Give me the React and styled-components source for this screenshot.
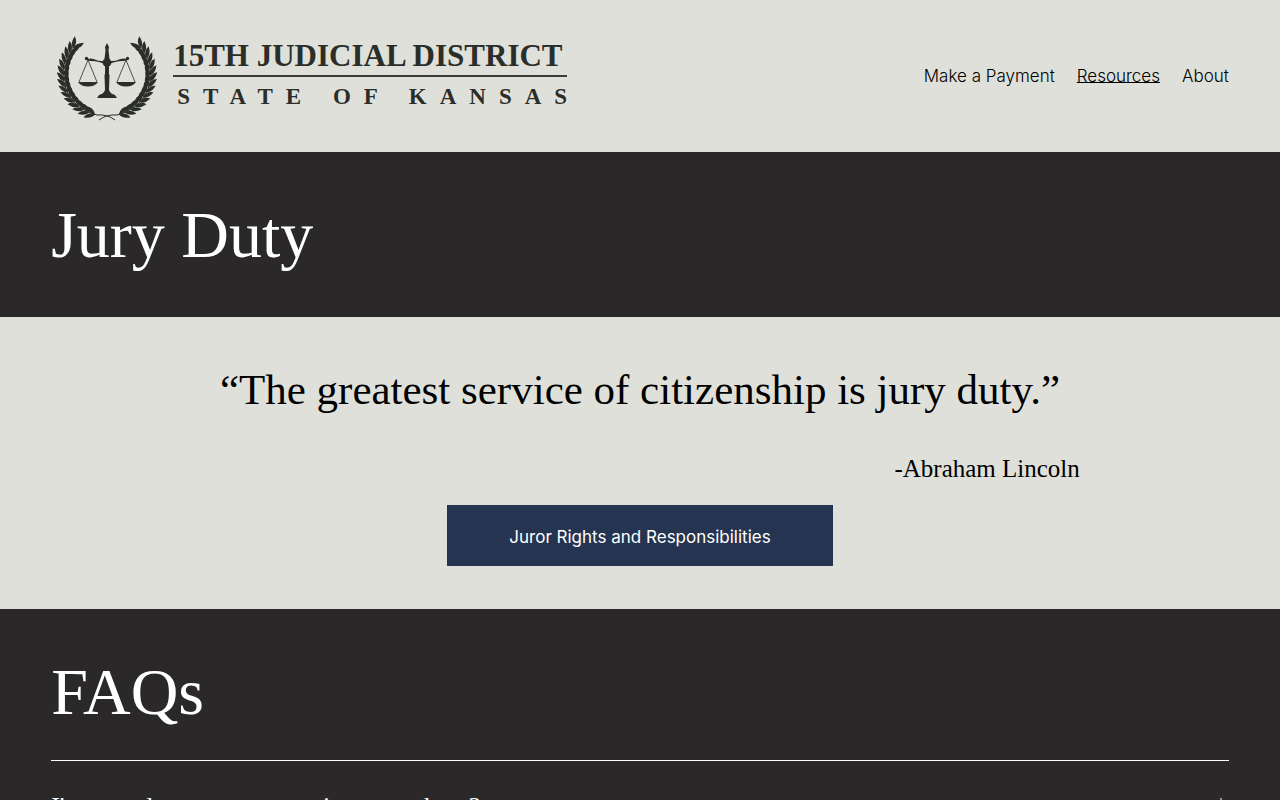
import React from "react";
import styled, { createGlobalStyle } from "styled-components";

const Global = createGlobalStyle`
  * { box-sizing: border-box; }
  body { margin: 0; background: #2b2829; color: #000; font-family: Inter, "Liberation Sans", sans-serif; }
  h1, h2, p { margin: 0; font-weight: 400; }
`;
const serif = `"Liberation Serif", serif`;

const Header = styled.header`
  display: flex; align-items: center; justify-content: space-between;
  padding: 24px 4vw; min-height: 152px; background: #dfe0da;
`;
const Brand = styled.a`
  display: flex; align-items: center; gap: 16px; padding-left: 6px;
  color: #2a2d28; text-decoration: none; font-family: ${serif};
`;
const BrandText = styled.span`display: flex; flex-direction: column; width: 394px; padding-top: 2px;`;
const District = styled.span`
  font-size: 31px; line-height: 38px; font-weight: 700; white-space: nowrap;
  border-bottom: 2px solid #3b3e37;
`;
const State = styled.span`
  padding-left: 4px; white-space: nowrap;
  font-size: 23px; line-height: 40px; font-weight: 700; letter-spacing: 13px;
`;
const Nav = styled.nav`display: flex; gap: 22px;`;
const NavLink = styled.a`
  color: #000; font-size: 17px; line-height: 28px; font-weight: 300;
  text-decoration: ${(p) => (p.$active ? "underline 1px" : "none")};
  text-decoration-skip-ink: none; text-underline-offset: 0px;
`;
const Band = styled.section`background: #2b2829; color: #fff; padding: 40px 4vw;`;
const Title = styled.h1`font-family: ${serif}; font-size: 66px; line-height: 85px;`;
const QuoteSection = styled.section`
  background: #dfe0da; padding: 44px 4vw 43px;
  display: flex; flex-direction: column; align-items: center;
`;
const Quote = styled.p`font-family: ${serif}; font-size: 43px; line-height: 58px; text-align: center;`;
const Author = styled.p`
  width: 100%; padding-right: 149px; margin: 32px 0 18px;
  font-family: ${serif}; font-size: 25px; line-height: 36px; text-align: right;
`;
const Button = styled.button`
  border: 0; background: #253450; color: #fff; padding: 18px 62px 15px;
  font: 400 17px/28px Inter, "Liberation Sans", sans-serif;
`;
const Faq = styled.button`
  width: 100%; border: 0; border-top: 1px solid #fff; background: none; color: #fff;
  padding: 30px 0; display: flex; justify-content: space-between; align-items: center;
  font: 400 26px/32px ${serif}; text-align: left; margin-top: 26px;
`;

const leaves = Array.from({ length: 15 }, (_, i) => {
  const deg = 106 + i * 8;
  const a = (deg * Math.PI) / 180;
  return { x: 50 + 43 * Math.cos(a), y: 44 + 42 * Math.sin(a), deg: deg + 90 };
});
const LEAF = "M0 0Q4 -4 12 -1Q7 4 0 0Z";

const Branch = () => (
  <g>
    <path d="M58 90Q50 84 40 85A43 42 0 0 1 18 15" fill="none" stroke="#2a2d28" />
    {leaves.map((l) => (
      <g key={l.deg} transform={`translate(${l.x} ${l.y})`}>
        <path d={LEAF} transform={`rotate(${l.deg - 26})`} />
        <path d={LEAF} transform={`rotate(${l.deg + 30})`} />
      </g>
    ))}
  </g>
);
const Pan = () => (
  <g>
    <path d="M31 30L22 52M31 30L40 52" fill="none" stroke="#2a2d28" strokeWidth="0.8" />
    <path d="M21 52H41Q38 56.5 31 56.5Q24 56.5 21 52Z" />
    <path d="M29 27.5Q29 31 34 31Q42 31 50 35V30.5Q43 32 38 29.5Q33 28 31 29Z" />
    <circle cx="29.5" cy="28.5" r="1.7" />
  </g>
);
const Emblem = () => (
  <svg width="100" height="92" viewBox="0 0 100 92" fill="#2a2d28" aria-hidden="true">
    <Branch />
    <g transform="translate(100 0) scale(-1 1)"><Branch /></g>
    <Pan />
    <g transform="translate(100 0) scale(-1 1)"><Pan /></g>
    <path d="M50 13L52 17L51.5 20L52.5 29H47.5L48.5 20L48 17Z" />
    <circle cx="50" cy="32.5" r="4.4" />
    <path d="M48 34H52V44L52.5 45L52 60H48L47.5 45L48 44Z" />
    <path d="M48 60H52L53 62Q54 64 58 65L60 68H40L42 65Q46 64 47 62Z" />
  </svg>
);
const Plus = () => (
  <svg width="16" height="20" viewBox="0 0 16 20" stroke="#fff" aria-hidden="true">
    <path d="M8 1V19M0 10H16" fill="none" />
  </svg>
);

export default function App() {
  return (
    <>
      <Global />
      <Header>
        <Brand href="#">
          <Emblem />
          <BrandText>
            <District>15TH JUDICIAL DISTRICT</District>
            <State>STATE OF KANSAS</State>
          </BrandText>
        </Brand>
        <Nav>
          <NavLink href="#">Make a Payment</NavLink>
          <NavLink href="#" $active>Resources</NavLink>
          <NavLink href="#">About</NavLink>
        </Nav>
      </Header>
      <main>
        <Band><Title>Jury Duty</Title></Band>
        <QuoteSection>
          <Quote>“The greatest service of citizenship is jury duty.”</Quote>
          <Author>-Abraham Lincoln</Author>
          <Button type="button">Juror Rights and Responsibilities</Button>
        </QuoteSection>
        <Band>
          <Title as="h2">FAQs</Title>
          <Faq type="button">
            <span>I'm a student, can my service move here?</span>
            <Plus />
          </Faq>
        </Band>
      </main>
    </>
  );
}
